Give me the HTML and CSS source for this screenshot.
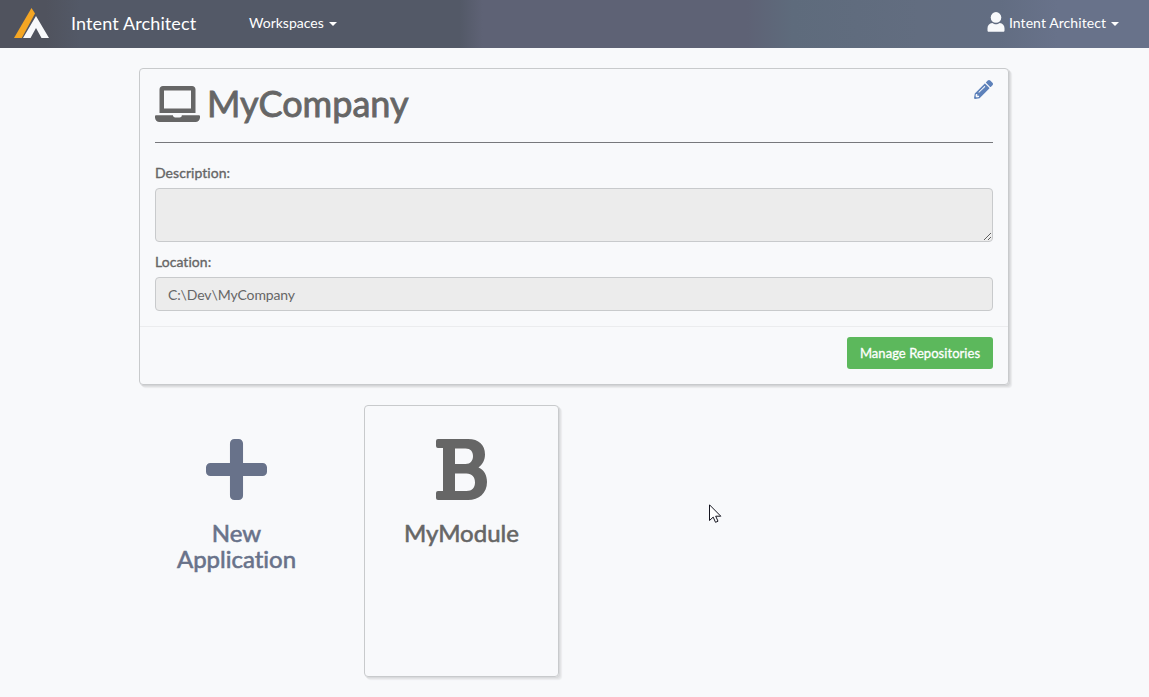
FILE: index.html
```html
<!DOCTYPE html>
<html lang="en">
<head>
<meta charset="utf-8">
<title>Intent Architect</title>
<link rel="stylesheet" href="styles.css">
</head>
<body>
<header class="navbar">
  <svg class="logo" viewBox="0 0 36 30"><path fill="#f5a623" d="M0 30 17.5 0 21 5.5 7.8 30Z"/><path fill="#f8f9fb" d="M9 30 22 8 35 30H27.5L22 20 16.5 30Z"/></svg>
  <span class="brand">Intent Architect</span>
  <a class="nav-link">Workspaces<i class="caret"></i></a>
  <a class="nav-link account"><svg class="user" viewBox="0 0 18 20"><circle cx="9" cy="5.4" r="5.3"/><path d="M5.3 11C6.5 11.9 7.7 12.2 9 12.2s2.5-.3 3.7-1.2c3 .4 4.8 2.4 4.800 5.200v2.300c0 .8-.5 1.300-1.300 1.300H1.800c-.8 0-1.300-.5-1.300-1.300v-2.300C.5 13.400 2.300 11.400 5.300 11Z"/></svg><span class="account-name">Intent Architect</span><i class="caret"></i></a>
</header>
<main class="container">
  <section class="panel">
    <div class="panel-body">
      <div class="title-row">
        <svg class="laptop" viewBox="0 0 640 512"><path d="M624 416H381.54c-.74 19.81-14.71 32-32.74 32H288c-18.69 0-33.02-17.47-32.77-32H16c-8.8 0-16 7.2-16 16v16c0 35.200 28.800 64 64 64h512c35.200 0 64-28.800 64-64v-16c0-8.800-7.200-16-16-16zM576 48c0-26.400-21.600-48-48-48H112C85.600 0 64 21.600 64 48v336h512V48zm-64 272H128V64h384v256z"/></svg>
        <h1 class="title">MyCompany</h1>
        <svg class="pencil" viewBox="0 0 512 512"><path d="M497.900 142.100l-46.100 46.100c-4.700 4.700-12.300 4.700-17 0l-111-111c-4.700-4.700-4.700-12.300 0-17l46.100-46.100c18.700-18.700 49.100-18.700 67.900 0l60.100 60.100c18.800 18.700 18.800 49.100 0 67.900zM284.200 99.800L21.600 362.400.4 483.900c-2.900 16.400 11.400 30.600 27.800 27.800l121.500-21.300 262.600-262.600c4.700-4.700 4.700-12.300 0-17l-111-111c-4.800-4.700-12.400-4.700-17.100 0zM124.100 339.900c-5.500-5.500-5.500-14.300 0-19.800l154-154c5.500-5.500 14.300-5.500 19.800 0s5.500 14.300 0 19.800l-154 154c-5.500 5.500-14.300 5.500-19.800 0zM88 424h48v36.300l-64.500 11.300-31.100-31.100L51.700 376H88v48z"/></svg>
      </div>
      <label class="label" for="description">Description:</label>
      <textarea class="field area" id="description" disabled></textarea>
      <label class="label" for="location">Location:</label>
      <input class="field line" id="location" value="C:\Dev\MyCompany" disabled>
    </div>
    <div class="panel-footer"><button class="button">Manage Repositories</button></div>
  </section>
  <div class="tiles">
    <div class="tile tile-new">
      <svg class="tile-icon" viewBox="0 32 448 448"><path d="M416 208H272V64c0-17.670-14.330-32-32-32h-32c-17.670 0-32 14.330-32 32v144H32c-17.670 0-32 14.330-32 32v32c0 17.670 14.330 32 32 32h144v144c0 17.670 14.330 32 32 32h32c17.670 0 32-14.330 32-32V304h144c17.670 0 32-14.330 32-32v-32c0-17.670-14.330-32-32-32z"/></svg>
      <h3 class="tile-title">New Application</h3>
    </div>
    <div class="tile tile-module">
      <svg class="tile-icon" viewBox="0 0 61 61"><path fill-rule="evenodd" d="M7 0H37C48 0 54 6 54 15.500C54 21 51.500 25.500 47.500 28.500C53 31 56 36 56 43C56 54 48 61 37 61H7Q5 61 5 59V54Q5 52 7 52H12V9H7Q5 9 5 7V2Q5 0 7 0ZM24 9.500V25H34.500C39.500 25 42 21.500 42 17C42 12.500 39.500 9.500 34.500 9.500ZM24 34.500V52H35.500C41 52 44 48.500 44 43.500C44 38 41 34.500 35.500 34.500Z"/></svg>
      <h3 class="tile-title">MyModule</h3>
    </div>
  </div>
</main>
<svg class="cursor" viewBox="0 0 13 20"><path fill="#fff" stroke="#15151f" d="M.5.8V16.500L4.200 13.100 6.500 18.300 9 17.200 6.700 12.200H11.800Z"/></svg>
</body>
</html>
```
FILE: styles.css
```css
* { box-sizing: border-box; }
body { margin: 0; height: 697px; overflow: hidden; background: #f8f9fb; color: #666; font: 14px/20px Lato, sans-serif; font-variant-ligatures: none; }
.navbar { height: 48px; padding: 0 30px 2px 14px; display: flex; align-items: center; color: #fff; background: linear-gradient(90deg, #50535e 0, #50535e 4%, #535967 7%, #535967 40%, #5e6275 42%, #5e6275 65%, #5e6b7c 69%, #626d80 80%, #626d82 87%, #68728a 92%); }
.logo { width: 36px; height: 30px; margin-right: 21px; }
.brand { width: 178px; font-size: 18px; letter-spacing: .12px; }
.nav-link { display: flex; align-items: center; }
.account { margin-left: auto; }
.account-name { letter-spacing: .07px; }
.caret { margin-left: 5px; margin-top: 2px; border: 4px solid transparent; border-top-color: currentColor; border-bottom: 0; }
.user { width: 18px; height: 20px; margin-right: 4px; margin-top: -2px; fill: #f8f9fb; }
.container { width: 870px; margin: 20px 0 0 139px; }
.panel { height: 317px; border: 1px solid #c8cacc; border-radius: 4px; box-shadow: 1px 1px 0 #d4d5d7, 2px 2px 0 #dfe0e2, 3px 3px 1px #e9eaec; }
.panel-body { height: 258px; padding: 0 15px; border-bottom: 1px solid #ebecee; }
.title-row { height: 74px; margin-bottom: 20px; display: flex; border-bottom: 1px solid #77787c; }
.laptop { width: 45px; height: 36px; margin: 17px 7px 0 0; fill: #666; }
.title { margin: 12px 0 0; font-size: 36px; line-height: 44px; font-weight: 400; -webkit-text-stroke: .9px currentColor; }
.pencil { width: 19px; height: 19px; margin: 11px 0 0 auto; fill: #5d81ba; }
.label { display: block; height: 20px; margin-bottom: 5px; font-weight: 400; letter-spacing: .05px; -webkit-text-stroke: .35px currentColor; }
.field { display: block; width: 100%; border: 1px solid #c8cacc; border-radius: 4px; background: #ececec; color: #666; padding: 6px 12px; font: 14px/20px Lato, sans-serif; letter-spacing: -.12px; }
.area { height: 54px; margin-bottom: 10px; resize: vertical; }
.line { height: 34px; }
.panel-footer { padding: 10px 15px; display: flex; justify-content: flex-end; }
.button { width: 146px; height: 32px; padding: 0; border: 0; border-radius: 3px; background: #5cb85c; color: #fff; font: 400 13px/20px Lato, sans-serif; font-variant-ligatures: none; letter-spacing: .05px; -webkit-text-stroke: .3px currentColor; }
.tiles { display: flex; gap: 30px; margin-top: 20px; }
.tile { width: 195px; height: 272px; padding: 33px 30px 0; border: 1px solid transparent; border-radius: 4px; display: flex; flex-direction: column; align-items: center; text-align: center; color: #666; }
.tile-new { color: #68728a; }
.tile-module { border-color: #c8cacc; box-shadow: 1px 1px 0 #d9dadc, 2px 2px 0 #e3e4e6, 3px 3px 1px #ebecee; }
.tile-icon { width: 61px; height: 61px; fill: currentColor; }
.tile-title { margin: 20px 0 0; font-size: 24px; line-height: 26px; font-weight: 400; -webkit-text-stroke: .6px currentColor; }
.cursor { position: absolute; left: 709px; top: 504px; width: 13px; height: 20px; }
```
